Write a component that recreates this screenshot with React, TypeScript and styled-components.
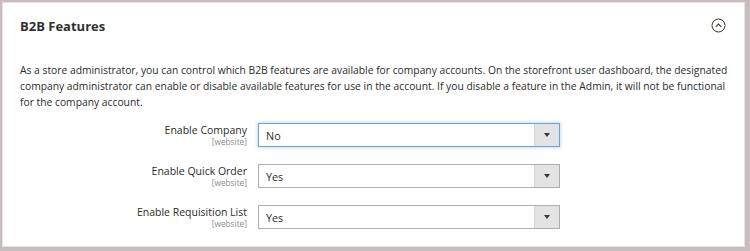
import React from "react";
import styled, { createGlobalStyle } from "styled-components";

const Global = createGlobalStyle`
  html, body { margin: 0; padding: 0; background: #c9bcbf; }
  body { font-family: "Open Sans", "Liberation Sans", sans-serif; color: #303030; }
`;

const Frame = styled.div`
  width: 750px;
  height: 251px;
  box-sizing: border-box;
  padding: 2px 5px 4px 2px;
  background: #c9bcbf;
`;

const Panel = styled.section`
  height: 100%;
  box-sizing: border-box;
  background: #fff;
  border: 1px solid #e6e3e3;
  padding: 0 8px 0 17px;
  overflow: hidden;
`;

const Header = styled.header`
  display: flex;
  align-items: center;
  justify-content: space-between;
  height: 45px;
`;

const Title = styled.h2`
  margin: 0;
  font-size: 13px;
  font-weight: 700;
  color: #303030;
`;

const Toggle = styled.span`
  display: flex;
  margin-right: 10px;
`;

const Intro = styled.p`
  margin: 14px 0 0;
  font-size: 10.3px;
  line-height: 16px;
  color: #2b2b2b;
`;

const Form = styled.div`
  display: grid;
  grid-template-columns: 227px 302px;
  grid-auto-rows: 24px;
  column-gap: 11px;
  row-gap: 17px;
  margin-top: 13px;
`;

const Label = styled.div`
  display: flex;
  flex-direction: column;
  align-items: flex-end;
`;

const LabelText = styled.span`
  font-size: 10.5px;
  line-height: 14px;
  color: #2b2b2b;
`;

const Scope = styled.span`
  font-size: 8.3px;
  line-height: 10px;
  color: #8a8a8a;
`;

const Select = styled.div<{ $focus?: boolean }>`
  display: flex;
  box-sizing: border-box;
  border: 1px solid ${(p) => (p.$focus ? "#6ba3d9" : "#adadad")};
  box-shadow: ${(p) => (p.$focus ? "0 0 3px 1px rgba(104,168,224,0.35)" : "none")};
  background: #fff;
`;

const Value = styled.span`
  flex: 1;
  display: flex;
  align-items: center;
  padding-left: 7px;
  font-size: 10.8px;
  color: #2b2b2b;
`;

const Arrow = styled.span`
  width: 24px;
  display: flex;
  align-items: center;
  justify-content: center;
  background: #e3e3e3;
  border-left: 1px solid #d6d6d6;
  &::after {
    content: "";
    border-left: 3.5px solid transparent;
    border-right: 3.5px solid transparent;
    border-top: 4px solid #41362f;
  }
`;

const rows = [
  { label: "Enable Company", value: "No", focus: true },
  { label: "Enable Quick Order", value: "Yes" },
  { label: "Enable Requisition List", value: "Yes" },
];

export default function App() {
  return (
    <>
      <Global />
      <Frame>
        <Panel>
          <Header>
            <Title>B2B Features</Title>
            <Toggle>
              <svg width="15" height="15" viewBox="0 0 15 15">
                <circle cx="7.5" cy="7.5" r="6.5" fill="none" stroke="#41362f" strokeWidth="1" />
                <path d="M4.8 8.8 L7.5 6.1 L10.2 8.8" fill="none" stroke="#41362f" strokeWidth="1.1" />
              </svg>
            </Toggle>
          </Header>
          <Intro>
            As a store administrator, you can control which B2B features are available for company accounts. On the storefront user dashboard, the designated company administrator can enable or disable available features for use in the account. If you disable a feature in the Admin, it will not be functional for the company account.
          </Intro>
          <Form>
            {rows.map((r) => (
              <React.Fragment key={r.label}>
                <Label>
                  <LabelText>{r.label}</LabelText>
                  <Scope>[website]</Scope>
                </Label>
                <Select $focus={r.focus}>
                  <Value>{r.value}</Value>
                  <Arrow />
                </Select>
              </React.Fragment>
            ))}
          </Form>
        </Panel>
      </Frame>
    </>
  );
}
